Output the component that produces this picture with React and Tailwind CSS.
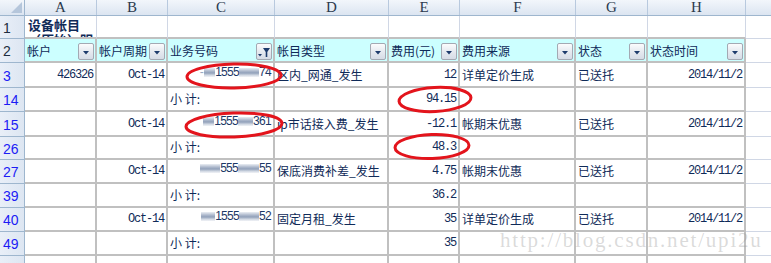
import React from "react";

const colW = ["w-[72px]", "w-[71px]", "w-[107px]", "w-[114px]", "w-[71px]", "w-[116px]", "w-[72px]", "w-[98px]"];
const letters = ["A", "B", "C", "D", "E", "F", "G", "H"];

const CJK = "font-['Noto_Sans_CJK_SC',sans-serif] text-[12px]";
const MONO = "font-['Liberation_Mono',monospace] text-[12px] tracking-[-1.2px]";

function Bar({ w }) {
  return (
    <span
      className={`inline-block h-[9px] ${w} bg-[linear-gradient(180deg,#e8ecf2,#a3b0c6_35%,#8596b2_55%,#cbd3df_80%,#f0f2f6)] opacity-90`}
    />
  );
}

function Redacted({ a, b, m, bw1, bw2 }) {
  return (
    <span className="flex items-center font-['Liberation_Sans',sans-serif] text-[12px] tracking-[-0.7px] text-[#1b3766]">
      {m && <span className="mr-[1px] text-[#9aa8c0]">-</span>}
      <Bar w={bw1} />
      <span>{a}</span>
      <Bar w={bw2} />
      <span>{b}</span>
    </span>
  );
}

function DropBtn({ filter }) {
  return (
    <span className="ml-auto mb-[1px] mr-[1px] flex h-[17px] w-[16px] shrink-0 items-center justify-center rounded-[2px] border border-[#a3a9b3] bg-[linear-gradient(180deg,#fbfcfd,#e6eaf0_50%,#d6dce6)]">
      {filter ? (
        <svg width="14" height="14" viewBox="0 0 14 14">
          <polygon points="1,9 5,9 3,11.5" fill="#1d3b6c" />
          <polygon points="6,3 13,3 10.3,7 10.3,12 8.7,12 8.7,7" fill="#1d3b6c" />
        </svg>
      ) : (
        <svg width="10" height="10" viewBox="0 0 10 10">
          <polygon points="2,4 8,4 5,7.5" fill="#1d3b6c" />
        </svg>
      )}
    </span>
  );
}

const headers = ["帐户", "帐户周期", "业务号码", "帐目类型", "费用(元)", "费用来源", "状态", "状态时间"];

const rows = [
  {
    n: "3",
    h: "h-[25px]",
    c: [
      { t: "426326", r: 1, m: 1 },
      { t: "Oct-14", r: 1, m: 1 },
      { red: { a: "1555", b: "74", m: 1, bw1: "w-[11px]", bw2: "w-[20px]" } },
      { t: "区内_网通_发生" },
      { t: "12", r: 1, m: 1 },
      { t: "详单定价生成" },
      { t: "已送托" },
      { t: "2014/11/2", r: 1, m: 1 },
    ],
  },
  { n: "14", h: "h-[24px]", c: [{}, {}, { t: "小 计:" }, {}, { t: "94.15", r: 1, m: 1 }, {}, {}, {}] },
  {
    n: "15",
    h: "h-[25px]",
    c: [
      {},
      { t: "Oct-14", r: 1, m: 1 },
      { red: { a: "1555", b: "361", bw1: "w-[11px]", bw2: "w-[15px]" } },
      { t: "ip市话接入费_发生" },
      { t: "-12.1", r: 1, m: 1 },
      { t: "帐期末优惠" },
      { t: "已送托" },
      { t: "2014/11/2", r: 1, m: 1 },
    ],
  },
  { n: "26", h: "h-[23px]", c: [{}, {}, { t: "小 计:" }, {}, { t: "48.3", r: 1, m: 1 }, {}, {}, {}] },
  {
    n: "27",
    h: "h-[24px]",
    c: [
      {},
      { t: "Oct-14", r: 1, m: 1 },
      { red: { a: "555", b: "55", bw1: "w-[20px]", bw2: "w-[21px]" } },
      { t: "保底消费补差_发生" },
      { t: "4.75", r: 1, m: 1 },
      { t: "帐期末优惠" },
      { t: "已送托" },
      { t: "2014/11/2", r: 1, m: 1 },
    ],
  },
  { n: "39", h: "h-[24px]", c: [{}, {}, { t: "小 计:" }, {}, { t: "36.2", r: 1, m: 1 }, {}, {}, {}] },
  {
    n: "40",
    h: "h-[24px]",
    c: [
      {},
      { t: "Oct-14", r: 1, m: 1 },
      { red: { a: "1555", b: "52", bw1: "w-[14px]", bw2: "w-[20px]" } },
      { t: "固定月租_发生" },
      { t: "35", r: 1, m: 1 },
      { t: "详单定价生成" },
      { t: "已送托" },
      { t: "2014/11/2", r: 1, m: 1 },
    ],
  },
  { n: "49", h: "h-[24px]", c: [{}, {}, { t: "小 计:" }, {}, { t: "35", r: 1, m: 1 }, {}, {}, {}] },
  { n: "", h: "h-[24px]", c: [{}, {}, {}, {}, {}, {}, {}, {}] },
];

function RowHead({ n, blue, h }) {
  return (
    <div
      className={`${h} w-[25px] shrink-0 border-r border-b border-[#9eb6ce] bg-[linear-gradient(90deg,#e9eff8,#dde6f2)] pl-[3px] flex items-center font-['Liberation_Sans',sans-serif] text-[14px] ${
        blue ? "text-[#1c1cf5]" : "text-[#1e2d40]"
      }`}
    >
      <span className="pt-[2px]">{n}</span>
    </div>
  );
}

export default function App() {
  return (
    <div className="relative h-[263px] w-[771px] overflow-hidden bg-white text-[#10306a]">
      {/* column header */}
      <div className="flex h-[16px] border-b border-[#9eb6ce] bg-[linear-gradient(180deg,#f2f6fb,#dce5f1)]">
        <div className="relative w-[25px] shrink-0 border-r border-[#9eb6ce]">
          <svg className="absolute right-[2px] bottom-[2px]" width="11" height="11" viewBox="0 0 11 11">
            <polygon points="11,0 11,11 0,11" fill="#b5c6db" />
          </svg>
        </div>
        {letters.map((l, i) => (
          <div
            key={l}
            className={`${colW[i]} shrink-0 border-r border-[#b8c9de] flex items-center justify-center font-['Liberation_Serif',serif] text-[15px] leading-none text-[#2c3a4e]`}
          >
            {l}
          </div>
        ))}
        <div className="flex-1" />
      </div>

      {/* row 1 */}
      <div className="flex h-[23px]">
        <RowHead n="1" h="h-[23px]" />
        {letters.map((l, i) => (
          <div key={l} className={`${colW[i]} shrink-0 border-r border-r-[#d0d7e5] border-b-2 border-b-[#c0c0c0] overflow-hidden`}>
            {i === 0 && (
              <div className="h-[21px] overflow-hidden pl-[3px] pt-[1px] font-['Noto_Sans_CJK_SC',sans-serif] text-[13px] font-bold leading-[15px] text-[#0f2a58]">
                设备帐目
                <br />
                （原始）明细
              </div>
            )}
          </div>
        ))}
        <div className="flex-1 border-b border-[#d0d7e5]" />
      </div>

      {/* row 2 : headers */}
      <div className="flex h-[24px]">
        <RowHead n="2" h="h-[24px]" />
        {headers.map((t, i) => (
          <div
            key={t}
            className={`${colW[i]} shrink-0 border-r-2 border-b-2 border-[#c0c0c0] bg-[#ccffff] flex items-end pl-[2px] ${CJK} text-[#0f2a58]`}
          >
            <span className="pb-[2px] whitespace-nowrap leading-[16px]">{t}</span>
            <DropBtn filter={i === 2} />
          </div>
        ))}
        <div className="flex-1 border-b border-[#d0d7e5]" />
      </div>

      {/* data rows */}
      {rows.map((row, ri) => (
        <div key={ri} className={`flex ${row.h}`}>
          <RowHead n={row.n} blue h={row.h} />
          {row.c.map((c, i) => (
            <div
              key={i}
              className={`${colW[i]} shrink-0 border-r-2 border-b-2 border-[#c0c0c0] flex items-end overflow-hidden whitespace-nowrap ${
                c.r || c.red ? "justify-end pr-[2px]" : "pl-[2px]"
              }`}
            >
              {c.red ? (
                <span className="pb-[5px]">
                  <Redacted {...c.red} />
                </span>
              ) : c.t ? (
                <span className={`pb-[3px] leading-[16px] text-[#0f2a58] ${c.m ? MONO : CJK}`}>{c.t}</span>
              ) : null}
            </div>
          ))}
          <div className="flex-1 border-b border-[#d0d7e5]" />
        </div>
      ))}

      {/* annotations */}
      <svg className="pointer-events-none absolute left-0 top-0" width="771" height="263" viewBox="0 0 771 263">
        <ellipse cx="234" cy="76" rx="47" ry="12" fill="none" stroke="#e3141c" strokeWidth="3" transform="rotate(-1 234 76)" />
        <ellipse cx="435" cy="99.5" rx="36" ry="12" fill="none" stroke="#e3141c" strokeWidth="3" transform="rotate(-3 435 99.5)" />
        <ellipse cx="234" cy="125" rx="48" ry="12" fill="none" stroke="#e3141c" strokeWidth="3" transform="rotate(-2 234 125)" />
        <ellipse cx="432" cy="146.5" rx="37" ry="12" fill="none" stroke="#e3141c" strokeWidth="3" transform="rotate(-2 432 146.5)" />
      </svg>

      {/* watermark */}
      <div className="pointer-events-none absolute left-[500px] top-[228px] font-['Liberation_Serif',serif] text-[21px] leading-[24px] tracking-[1.8px] text-[rgba(150,150,150,0.35)] whitespace-nowrap">
        http://blog.csdn.net/upi2u
      </div>
    </div>
  );
}
